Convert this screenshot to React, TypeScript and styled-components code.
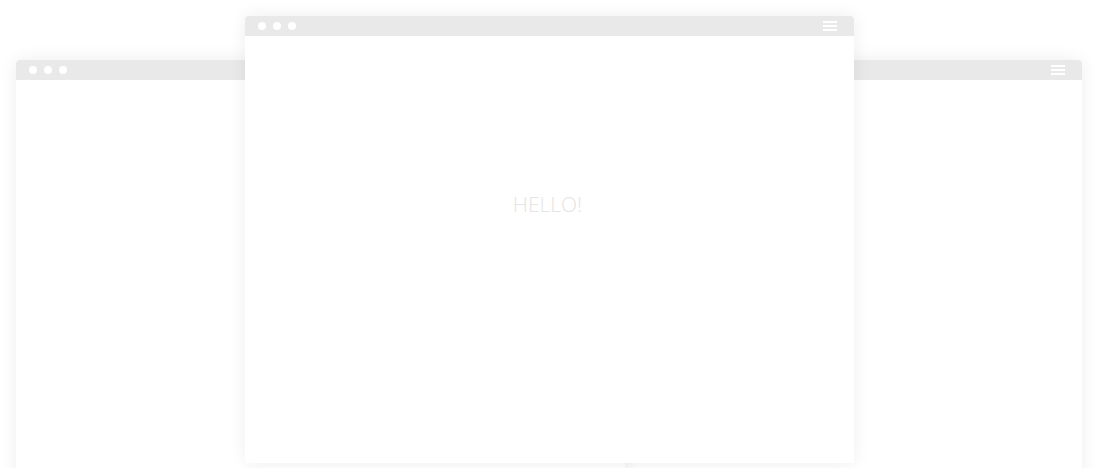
import styled, { createGlobalStyle } from "styled-components";

const GlobalStyle = createGlobalStyle`
  html, body {
    margin: 0;
    padding: 0;
    background: #ffffff;
    overflow: hidden;
  }
  body {
    font-family: "Open Sans", "Noto Sans", sans-serif;
  }
`;

interface WindowProps {
  $left: number;
  $top: number;
  $height: number;
  $z: number;
}

const Desktop = styled.div`
  position: relative;
  width: 1102px;
  height: 468px;
  overflow: hidden;
  background: #ffffff;
`;

const Window = styled.div<WindowProps>`
  position: absolute;
  left: ${(p) => p.$left}px;
  top: ${(p) => p.$top}px;
  width: 609px;
  height: ${(p) => p.$height}px;
  z-index: ${(p) => p.$z};
  display: flex;
  flex-direction: column;
  background: #ffffff;
  border-radius: 4px 4px 0 0;
  box-shadow: 0 0 18px rgba(0, 0, 0, 0.07);
`;

const TitleBar = styled.div`
  display: flex;
  align-items: center;
  justify-content: space-between;
  height: 20px;
  padding: 0 17px 0 13px;
  background: #e9e9e9;
  border-radius: 4px 4px 0 0;
`;

const Dots = styled.div`
  display: flex;
  gap: 7px;
`;

const Dot = styled.span`
  width: 8px;
  height: 8px;
  border-radius: 50%;
  background: #ffffff;
`;

const Menu = styled.div`
  display: flex;
  flex-direction: column;
  gap: 2px;
  width: 14px;
`;

const MenuLine = styled.span`
  height: 2px;
  background: #ffffff;
`;

const Body = styled.div`
  flex: 1;
  display: flex;
  justify-content: center;
  align-items: flex-start;
`;

const Hello = styled.div`
  margin-top: 153px;
  margin-right: 4px;
  font-family: "Open Sans", "Noto Sans", sans-serif;
  font-size: 21px;
  font-weight: 300;
  line-height: 30px;
  color: #e4e4e4;
`;

const BrowserWindow = ({
  left,
  top,
  height,
  z,
  children,
}: {
  left: number;
  top: number;
  height: number;
  z: number;
  children?: React.ReactNode;
}) => (
  <Window $left={left} $top={top} $height={height} $z={z}>
    <TitleBar>
      <Dots>
        <Dot />
        <Dot />
        <Dot />
      </Dots>
      <Menu>
        <MenuLine />
        <MenuLine />
        <MenuLine />
      </Menu>
    </TitleBar>
    <Body>{children}</Body>
  </Window>
);

const App = () => (
  <>
    <GlobalStyle />
    <Desktop>
      <BrowserWindow left={473} top={60} height={460} z={1} />
      <BrowserWindow left={16} top={60} height={460} z={2} />
      <BrowserWindow left={245} top={16} height={447} z={3}>
        <Hello>HELLO!</Hello>
      </BrowserWindow>
    </Desktop>
  </>
);

export default App;
